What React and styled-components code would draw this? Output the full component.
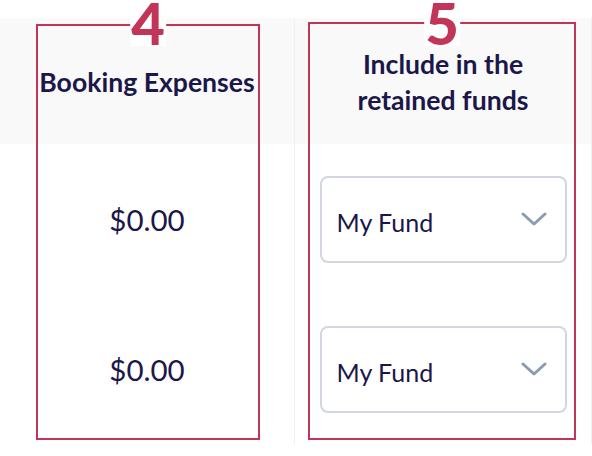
import styled, { createGlobalStyle } from 'styled-components';

const GlobalStyle = createGlobalStyle`
  html, body {
    margin: 0;
    padding: 0;
    background: #ffffff;
  }
  body {
    font-family: Lato, "Open Sans", sans-serif;
    color: #1b1749;
  }
`;

const Page = styled.div`
  padding-top: 18px;
  width: 592px;
  height: 438px;
  overflow: hidden;
`;

const Table = styled.div`
  display: grid;
  grid-template-columns: 295px 297px;
`;

const Column = styled.div`
  position: relative;
  display: flex;
  flex-direction: column;
  border-right: 1px solid #f0f0f7;
`;

const HeaderCell = styled.div`
  height: 126px;
  background: #f9f9fa;
  display: flex;
  align-items: center;
  justify-content: center;
  text-align: center;
  font-weight: 700;
  font-size: 26.6px;
  line-height: 36px;
  padding: 2px ${props => props.$pad || 0}px 0;
  box-sizing: border-box;
`;

const BodyCell = styled.div`
  height: 150px;
  display: flex;
  align-items: center;
  justify-content: center;
  font-size: ${props => props.$size || 26}px;
`;

const Select = styled.div`
  box-sizing: border-box;
  width: 247px;
  height: 87px;
  border: 2px solid #d2d6de;
  border-radius: 8px;
  display: flex;
  align-items: center;
  justify-content: space-between;
  padding: 6px 18px 0 15px;
  font-size: 25px;
  background: #ffffff;
`;

const Chevron = styled.svg`
  width: 26px;
  height: 14px;
  margin-top: -6px;
`;

const Marker = styled.div`
  position: absolute;
  left: ${props => props.$left}px;
  top: ${props => props.$top}px;
  width: ${props => props.$width}px;
  height: ${props => props.$height}px;
  box-sizing: border-box;
  border: 2px solid #c13658;
  pointer-events: none;
`;

const MarkerNumber = styled.span`
  position: absolute;
  left: 50%;
  top: ${props => props.$offset}px;
  transform: translateX(-50%);
  background: #ffffff;
  color: #c13658;
  font-family: Lato, sans-serif;
  font-weight: 900;
  font-size: 58px;
  line-height: 46px;
  padding: 0 1px;
`;

const rows = [
  { amount: '$0.00', fund: 'My Fund' },
  { amount: '$0.00', fund: 'My Fund' },
];

function ChevronDown() {
  return (
    <Chevron viewBox="0 0 26 14" fill="none">
      <polyline
        points="2,2 13,12 24,2"
        stroke="#8c9bb1"
        strokeWidth="3"
        strokeLinecap="round"
        strokeLinejoin="round"
      />
    </Chevron>
  );
}

export default function App() {
  return (
    <>
      <GlobalStyle />
      <Page>
        <Table>
          <Column>
            <HeaderCell>Booking Expenses</HeaderCell>
            {rows.map((r, i) => (
              <BodyCell key={i} $size={29.5}>{r.amount}</BodyCell>
            ))}
            <Marker $left={36} $top={6} $width={224} $height={416}>
              <MarkerNumber $offset={-26}>4</MarkerNumber>
            </Marker>
          </Column>
          <Column>
            <HeaderCell $pad={60}>Include in the retained funds</HeaderCell>
            {rows.map((r, i) => (
              <BodyCell key={i}>
                <Select>
                  <span>{r.fund}</span>
                  <ChevronDown />
                </Select>
              </BodyCell>
            ))}
            <Marker $left={13} $top={4} $width={268} $height={418}>
              <MarkerNumber $offset={-24}>5</MarkerNumber>
            </Marker>
          </Column>
        </Table>
      </Page>
    </>
  );
}
